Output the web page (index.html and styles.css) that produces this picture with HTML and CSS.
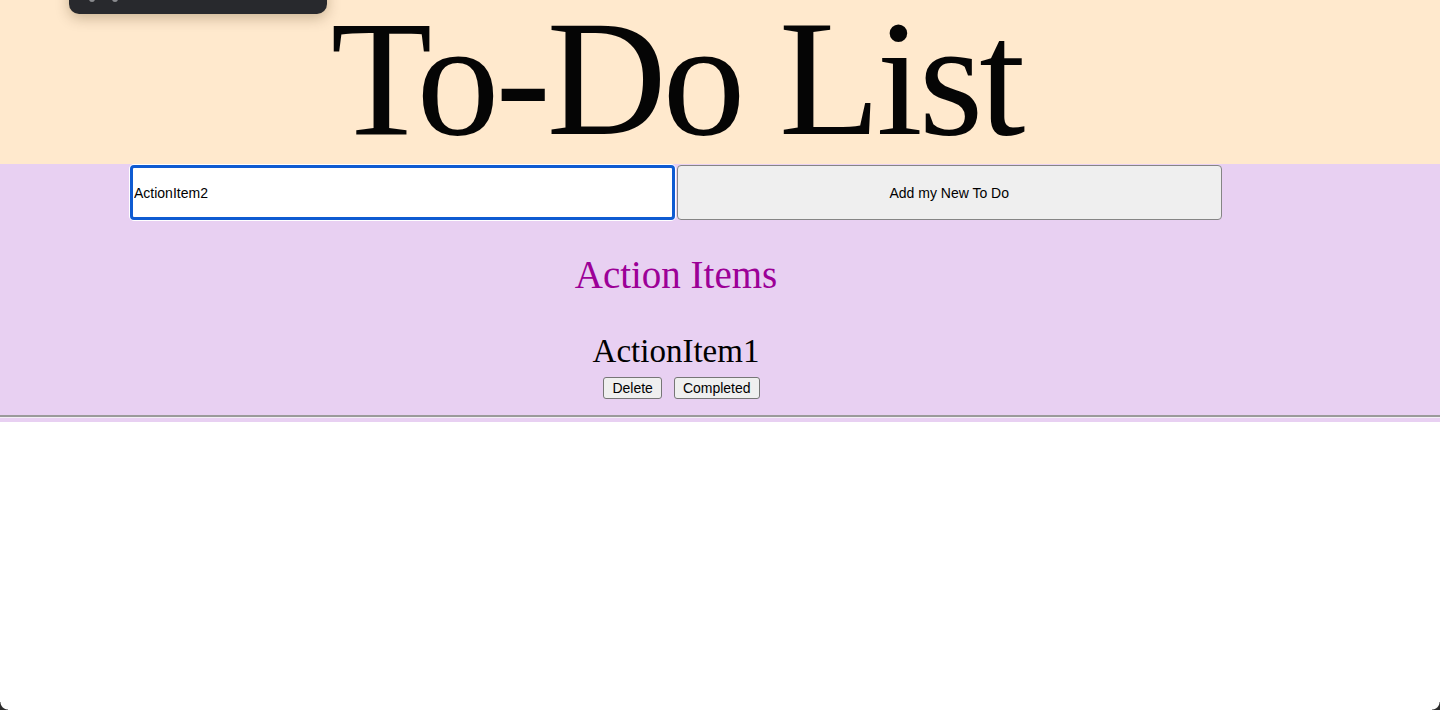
FILE: index.html
```html
<!DOCTYPE html>
<html lang="en">
<head>
<meta charset="utf-8">
<title>To-Do List</title>
<link rel="stylesheet" href="styles.css">
</head>
<body>
  <div class="popup"><span class="dot"></span><span class="dot"></span></div>
  <header class="top">
    <div class="wrap">
      <h1 class="title">To-Do List</h1>
    </div>
  </header>
  <main class="board">
    <div class="wrap">
      <form class="add-row">
        <input class="new-input" type="text" value="ActionItem2">
        <button class="add-btn" type="button">Add my New To Do</button>
      </form>
      <h2 class="section-title">Action Items</h2>
      <ul class="items">
        <li class="item">
          <h3 class="item-name">ActionItem1</h3>
          <div class="actions">
            <button class="small-btn" type="button">Delete</button>
            <button class="small-btn" type="button">Completed</button>
          </div>
        </li>
      </ul>
    </div>
    <hr class="divider">
  </main>
  <span class="corner corner-left"></span>
  <span class="corner corner-right"></span>
</body>
</html>
```
FILE: styles.css
```css
html, body {
  margin: 0;
  padding: 0;
  background: #ffffff;
  height: 710px;
  overflow: hidden;
}

body {
  font-family: "Liberation Serif", "Times New Roman", serif;
  color: #000;
}

.wrap {
  width: 1092px;
  margin-left: 130px;
}

.top {
  background: #ffe9cd;
  height: 164px;
}

.title {
  margin: 0;
  padding-bottom: 8px;
  font-family: "Liberation Serif", "Times New Roman", serif;
  font-weight: 400;
  font-size: 166px;
  line-height: 156px;
  letter-spacing: -4px;
  text-align: center;
  color: #050505;
}

.board {
  background: #e8d0f2;
  padding-top: 1px;
  padding-bottom: 4px;
}

.add-row {
  display: flex;
  gap: 2px;
  margin: 0;
}

.new-input {
  box-sizing: border-box;
  width: 545px;
  height: 55px;
  margin: 0;
  padding: 0 0 0 1px;
  border: 3px solid #0f5bd2;
  border-radius: 4px;
  box-shadow: 0 0 0 1px #ffffff;
  outline: none;
  background: #fff;
  font-family: "Liberation Sans", Arial, sans-serif;
  font-size: 14px;
  color: #000;
}

.add-btn {
  box-sizing: border-box;
  width: 546px;
  height: 55px;
  margin: 0;
  border: 1px solid #858585;
  border-radius: 4px;
  background: #efefef;
  font-family: "Liberation Sans", Arial, sans-serif;
  font-size: 14px;
  color: #000;
}

.section-title {
  margin: 32px 0 0;
  font-family: "Liberation Serif", "Times New Roman", serif;
  font-weight: 400;
  font-size: 39px;
  line-height: 46px;
  text-align: center;
  color: #9c0097;
}

.items {
  list-style: none;
  margin: 0;
  padding: 0;
}

.item {
  display: flex;
  flex-direction: column;
  align-items: center;
}

.item-name {
  margin: 33px 0 0;
  font-family: "Liberation Serif", "Times New Roman", serif;
  font-weight: 400;
  font-size: 33px;
  line-height: 40px;
  color: #000;
}

.actions {
  display: flex;
  gap: 12px;
  margin-top: 6px;
  padding-left: 11px;
}

.small-btn {
  box-sizing: border-box;
  height: 22px;
  margin: 0;
  padding: 1px 8px;
  border: 1px solid #767676;
  border-radius: 3px;
  background: #efefef;
  font-family: "Liberation Sans", Arial, sans-serif;
  font-size: 14px;
  line-height: 18px;
  color: #000;
}

.divider {
  margin: 16px 0 0;
  height: 0;
  border: 0;
  border-top: 2px solid #9a9a9a;
  border-bottom: 1px solid #f3eef6;
}

.popup {
  position: absolute;
  left: 69px;
  top: -20px;
  width: 258px;
  height: 34px;
  background: #28292d;
  border-radius: 10px;
  box-shadow: 0 4px 14px rgba(60, 40, 0, 0.28);
  display: flex;
  align-items: flex-end;
  gap: 17px;
  padding-left: 20px;
  box-sizing: border-box;
  padding-bottom: 12px;
  z-index: 5;
}

.dot {
  width: 6px;
  height: 6px;
  border-radius: 50%;
  background: #8a8b8f;
}

.corner {
  position: absolute;
  bottom: 0;
  width: 8px;
  height: 8px;
}

.corner-left {
  left: 0;
  background: radial-gradient(circle at 8px 0, transparent 7px, #2b2b2b 8px);
}

.corner-right {
  right: 0;
  background: radial-gradient(circle at 0 0, transparent 7px, #2b2b2b 8px);
}
```
